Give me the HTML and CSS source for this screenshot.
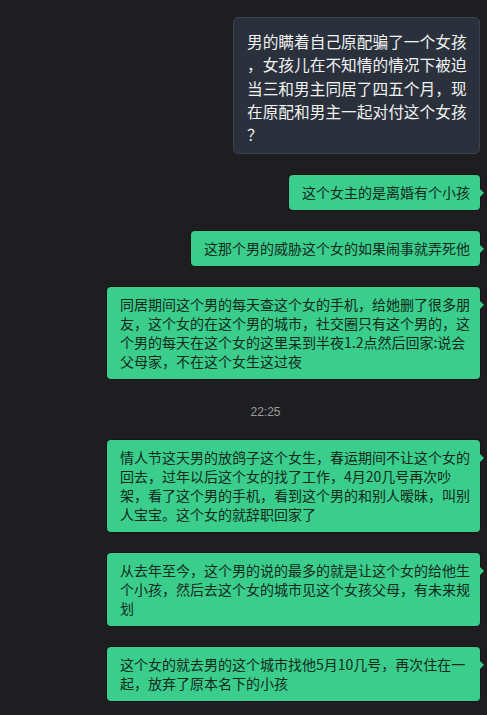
FILE: index.html
```html
<!DOCTYPE html>
<html lang="zh">
<head>
<meta charset="utf-8">
<link rel="stylesheet" href="styles.css">
</head>
<body>
<div class="chat">
  <div class="quote">男的瞒着自己原配骗了一个女孩，女孩儿在不知情的情况下被迫当三和男主同居了四五个月，现在原配和男主一起对付这个女孩？</div>
  <div class="bubble">这个女主的是离婚有个小孩</div>
  <div class="bubble">这那个男的威胁这个女的如果闹事就弄死他</div>
  <div class="bubble">同居期间这个男的每天查这个女的手机，给她删了很多朋友，这个女的在这个男的城市，社交圈只有这个男的，这个男的每天在这个女的这里呆到半夜1.2点然后回家:说会父母家，不在这个女生这过夜</div>
  <div class="time">22:25</div>
  <div class="bubble">情人节这天男的放鸽子这个女生，春运期间不让这个女的回去，过年以后这个女的找了工作，4月20几号再次吵架，看了这个男的手机，看到这个男的和别人暧昧，叫别人宝宝。这个女的就辞职回家了</div>
  <div class="bubble">从去年至今，这个男的说的最多的就是让这个女的给他生个小孩，然后去这个女的城市见这个女孩父母，有未来规划</div>
  <div class="bubble">这个女的就去男的这个城市找他5月10几号，再次住在一起，放弃了原本名下的小孩</div>
</div>
</body>
</html>
```
FILE: styles.css
```css
html, body {
  margin: 0;
  padding: 0;
  background: #1e1d20;
  height: 100%;
}
.chat {
  display: flex;
  flex-direction: column;
  align-items: flex-end;
  padding: 17px 7px 0 0;
  font-family: "Noto Sans CJK SC", "Noto Sans", sans-serif;
}
.quote {
  box-sizing: content-box;
  width: 221px;
  padding: 12px 11px 7px 13px;
  background: #2a313c;
  border: 1px solid #3a424d;
  border-radius: 5px;
  color: #f2f2f2;
  font-size: 15.7px;
  line-height: 23.3px;
  line-break: anywhere;
  margin-bottom: 21px;
}
.bubble {
  position: relative;
  max-width: 350px;
  padding: 8px 10px 8px 13px;
  background: #3bcd8c;
  border-radius: 4px;
  color: #112a1c;
  font-size: 14px;
  line-height: 19px;
  margin-bottom: 21px;
  box-shadow: 0 0 0 1px rgba(0, 0, 0, 0.25);
}
.bubble::after {
  content: "";
  position: absolute;
  right: -4px;
  top: 13px;
  border-style: solid;
  border-width: 5px 0 5px 5px;
  border-color: transparent transparent transparent #3bcd8c;
}
.time {
  align-self: stretch;
  text-align: center;
  padding-left: 51px;
  margin-top: 4px;
  margin-bottom: 20px;
  color: #9c9ca0;
  font-size: 12px;
  line-height: 16px;
  font-family: "Liberation Sans", "Noto Sans", sans-serif;
}
```
